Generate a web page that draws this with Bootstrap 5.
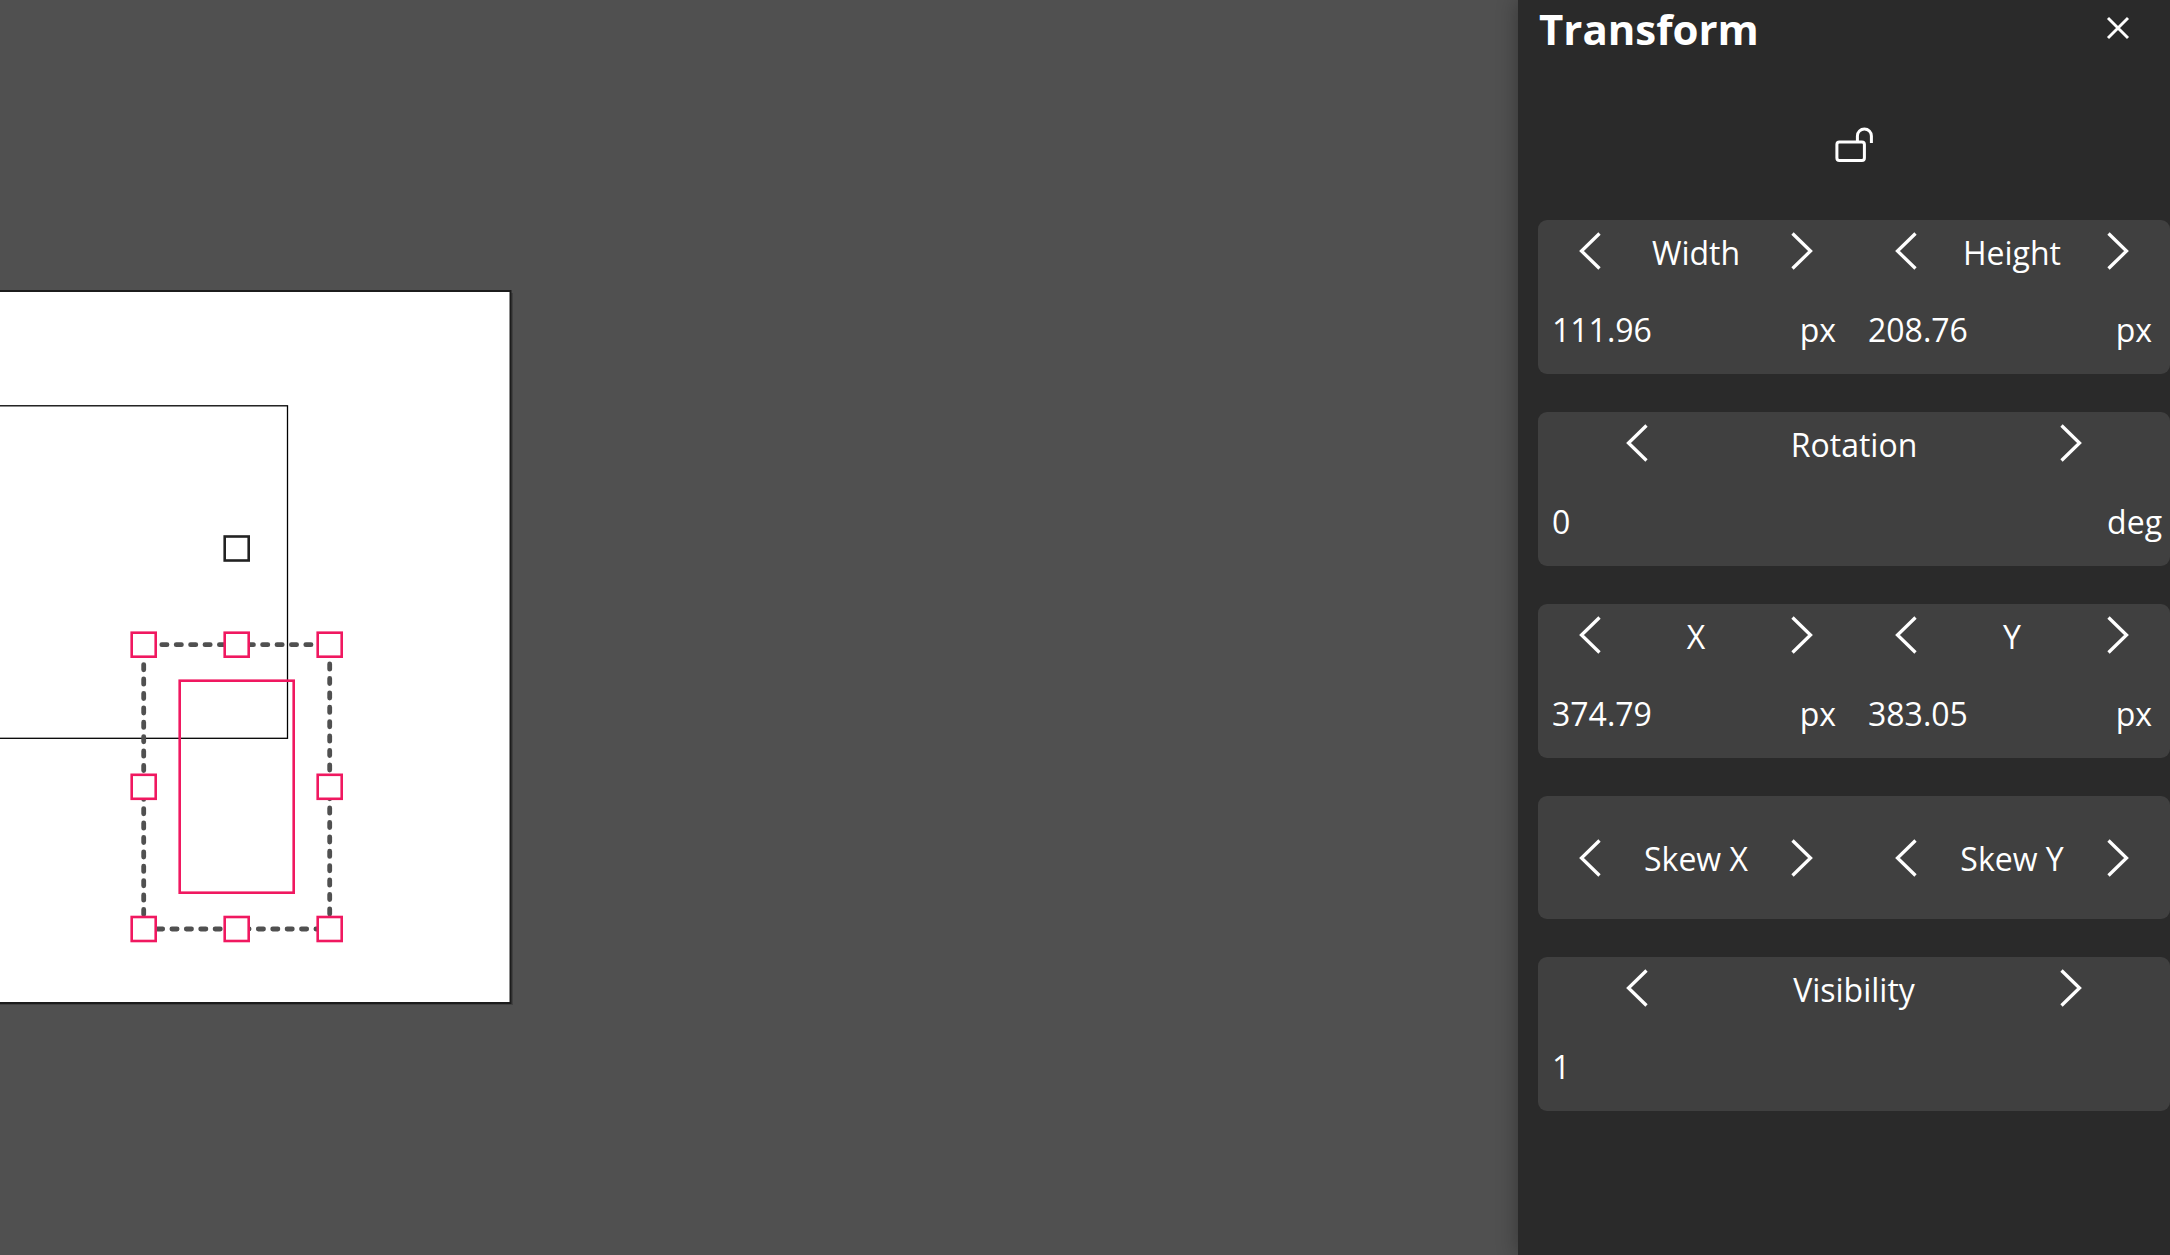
<!DOCTYPE html>
<html lang="en">
<head>
<meta charset="utf-8">
<meta name="viewport" content="width=device-width, initial-scale=1">
<title>Transform</title>
<link href="https://cdn.jsdelivr.net/npm/bootstrap@5.3.0/dist/css/bootstrap.min.css" rel="stylesheet">
<style>
body { background: #505050; color: #fff; font-family: "Open Sans", "Noto Sans", sans-serif; font-size: 32px; line-height: 44px; }
.stage svg { display: block; width: 100%; height: 100%; }
.side-panel { flex: 0 0 652px; background: #2a2a2a; padding-left: 20px; box-shadow: 0 0 20px rgba(0,0,0,.32); }
.panel-head { height: 58px; padding: 0 20px 0 1px; }
.panel-title { font-size: 42px; line-height: 58px; font-weight: 700; }
.icon-btn { background: none; border: 0; padding: 0; color: #fff; display: flex; align-items: center; justify-content: center; }
.close-btn { width: 64px; height: 55px; }
.lock-row { height: 162px; padding-top: 55px; }
.lock-btn { width: 64px; height: 64px; }
.groups { gap: 38px; }
.tile { background: #404040; border-radius: 9px; }
.stepper { height: 64px; }
.stepper .icon-btn { flex: 0 0 33%; height: 61px; }
.stepper.wide .icon-btn { flex-basis: 31.3%; }
.stepper-name { flex: 1 1 0; padding-top: 2px; text-align: center; white-space: nowrap; }
.skew, .skew .stepper, .skew .icon-btn { height: 123px; }
.entry { height: 90px; padding: 0 18px 0 14px; }
.entry.wide { padding-right: 8px; }
.entry span { padding-top: 2px; }
.entry input { flex: 1 1 0; min-width: 0; width: 100%; height: 48px; padding: 0; border: 0; outline: 0; background: none; color: #fff; }
</style>
<script src="https://cdn.jsdelivr.net/npm/bootstrap@5.3.0/dist/js/bootstrap.bundle.min.js"></script>
</head>
<body>
<svg class="d-none" aria-hidden="true">
  <symbol id="prev" viewBox="0 0 24 40"><path d="M21.500 2.500 3.500 20l18 17.500" fill="none" stroke="currentColor" stroke-width="3.300"/></symbol>
  <symbol id="next" viewBox="0 0 24 40"><path d="M2.500 2.500 20.500 20l-18 17.500" fill="none" stroke="currentColor" stroke-width="3.300"/></symbol>
</svg>
<div class="d-flex min-vh-100 overflow-hidden">
  <main class="stage flex-grow-1 position-relative overflow-hidden">
    <div class="position-absolute top-0 start-0 w-100 h-100">
      <svg role="img" aria-label="Artboard with a selected rectangle">
        <rect x="-20" y="293" width="533" height="712" fill="#000" opacity=".2"/>
        <rect x="-20" y="291" width="530.500" height="712" fill="#fff" stroke="#1c1c1c" stroke-width="2"/>
        <rect x="-20" y="405.800" width="307.500" height="332.500" fill="none" stroke="#000" stroke-width="1.300"/>
        <path d="M143.700 929V644.700h186V929z" fill="none" stroke="#505050" stroke-width="4.800" stroke-linecap="round" stroke-dasharray="5.200 9.200"/>
        <rect x="179.700" y="680.700" width="114" height="212" fill="none" stroke="#f01860" stroke-width="2.600"/>
        <rect x="224.700" y="536.500" width="24" height="24" fill="#fff" stroke="#222" stroke-width="2.600"/>
        <g fill="#fff" stroke="#f01860" stroke-width="2.600">
          <rect x="131.700" y="632.700" width="24" height="24"/>
          <rect x="224.700" y="632.700" width="24" height="24"/>
          <rect x="317.700" y="632.700" width="24" height="24"/>
          <rect x="131.700" y="774.800" width="24" height="24"/>
          <rect x="317.700" y="774.800" width="24" height="24"/>
          <rect x="131.700" y="917" width="24" height="24"/>
          <rect x="224.700" y="917" width="24" height="24"/>
          <rect x="317.700" y="917" width="24" height="24"/>
        </g>
      </svg>
    </div>
  </main>
  <aside class="side-panel position-relative">
    <header class="panel-head d-flex justify-content-between align-items-start">
      <h1 class="panel-title m-0">Transform</h1>
      <button type="button" class="icon-btn close-btn" aria-label="Close">
        <svg width="24" height="24" viewBox="0 0 24 24"><path d="M2 2l20 20M22 2 2 22" fill="none" stroke="currentColor" stroke-width="2.900"/></svg>
      </button>
    </header>
    <div class="lock-row d-flex justify-content-center align-items-start">
      <button type="button" class="icon-btn lock-btn" aria-label="Lock proportions">
        <svg width="38" height="36" viewBox="0 0 38 36"><g fill="none" stroke="currentColor" stroke-width="3"><rect x="1.900" y="14.900" width="27.500" height="18.500" rx="2.500"/><path d="M22.400 15V9a7 7 0 0 1 14 0v7"/></g></svg>
      </button>
    </div>
    <div class="groups d-flex flex-column">
      <section class="tile row g-0">
        <div class="col-6">
          <div class="stepper d-flex">
            <button type="button" class="icon-btn" aria-label="Decrease width"><svg width="24" height="40"><use href="#prev"/></svg></button>
            <label class="stepper-name align-self-center" for="w">Width</label>
            <button type="button" class="icon-btn" aria-label="Increase width"><svg width="24" height="40"><use href="#next"/></svg></button>
          </div>
          <div class="entry d-flex align-items-center"><input id="w" type="text" value="111.96"><span>px</span></div>
        </div>
        <div class="col-6">
          <div class="stepper d-flex">
            <button type="button" class="icon-btn" aria-label="Decrease height"><svg width="24" height="40"><use href="#prev"/></svg></button>
            <label class="stepper-name align-self-center" for="h">Height</label>
            <button type="button" class="icon-btn" aria-label="Increase height"><svg width="24" height="40"><use href="#next"/></svg></button>
          </div>
          <div class="entry d-flex align-items-center"><input id="h" type="text" value="208.76"><span>px</span></div>
        </div>
      </section>
      <section class="tile">
        <div class="stepper wide d-flex">
          <button type="button" class="icon-btn" aria-label="Rotate left"><svg width="24" height="40"><use href="#prev"/></svg></button>
          <label class="stepper-name align-self-center" for="rot">Rotation</label>
          <button type="button" class="icon-btn" aria-label="Rotate right"><svg width="24" height="40"><use href="#next"/></svg></button>
        </div>
        <div class="entry wide d-flex align-items-center"><input id="rot" type="text" value="0"><span>deg</span></div>
      </section>
      <section class="tile row g-0">
        <div class="col-6">
          <div class="stepper d-flex">
            <button type="button" class="icon-btn" aria-label="Decrease X"><svg width="24" height="40"><use href="#prev"/></svg></button>
            <label class="stepper-name align-self-center" for="x">X</label>
            <button type="button" class="icon-btn" aria-label="Increase X"><svg width="24" height="40"><use href="#next"/></svg></button>
          </div>
          <div class="entry d-flex align-items-center"><input id="x" type="text" value="374.79"><span>px</span></div>
        </div>
        <div class="col-6">
          <div class="stepper d-flex">
            <button type="button" class="icon-btn" aria-label="Decrease Y"><svg width="24" height="40"><use href="#prev"/></svg></button>
            <label class="stepper-name align-self-center" for="y">Y</label>
            <button type="button" class="icon-btn" aria-label="Increase Y"><svg width="24" height="40"><use href="#next"/></svg></button>
          </div>
          <div class="entry d-flex align-items-center"><input id="y" type="text" value="383.05"><span>px</span></div>
        </div>
      </section>
      <section class="tile skew row g-0">
        <div class="col-6 stepper d-flex">
          <button type="button" class="icon-btn" aria-label="Decrease skew X"><svg width="24" height="40"><use href="#prev"/></svg></button>
          <span class="stepper-name align-self-center">Skew X</span>
          <button type="button" class="icon-btn" aria-label="Increase skew X"><svg width="24" height="40"><use href="#next"/></svg></button>
        </div>
        <div class="col-6 stepper d-flex">
          <button type="button" class="icon-btn" aria-label="Decrease skew Y"><svg width="24" height="40"><use href="#prev"/></svg></button>
          <span class="stepper-name align-self-center">Skew Y</span>
          <button type="button" class="icon-btn" aria-label="Increase skew Y"><svg width="24" height="40"><use href="#next"/></svg></button>
        </div>
      </section>
      <section class="tile">
        <div class="stepper wide d-flex">
          <button type="button" class="icon-btn" aria-label="Decrease visibility"><svg width="24" height="40"><use href="#prev"/></svg></button>
          <label class="stepper-name align-self-center" for="vis">Visibility</label>
          <button type="button" class="icon-btn" aria-label="Increase visibility"><svg width="24" height="40"><use href="#next"/></svg></button>
        </div>
        <div class="entry wide d-flex align-items-center"><input id="vis" type="text" value="1"></div>
      </section>
    </div>
  </aside>
</div>
</body>
</html>
